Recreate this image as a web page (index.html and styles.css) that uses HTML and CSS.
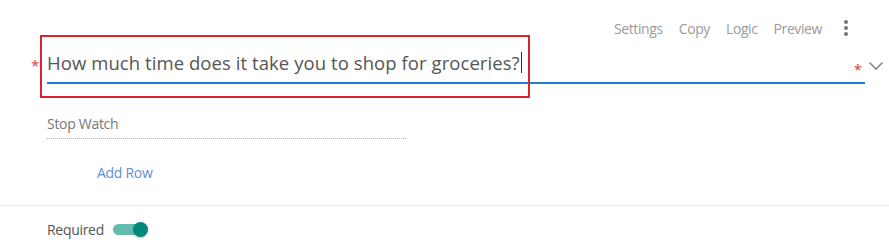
FILE: index.html
```html
<!DOCTYPE html>
<html>
<head>
<meta charset="utf-8">
<link rel="stylesheet" href="styles.css">
</head>
<body>
<div class="card">
  <div class="toolbar">
    <span class="tool">Settings</span>
    <span class="tool">Copy</span>
    <span class="tool">Logic</span>
    <span class="tool">Preview</span>
    <span class="kebab"><i></i><i></i><i></i></span>
  </div>
  <div class="question">
    <span class="req-left">*</span>
    <div class="q-input">
      <span class="q-text">How much time does it take you to shop for groceries?</span><span class="caret"></span>
    </div>
    <span class="req-right">*</span>
    <svg class="chevron" width="16" height="10" viewBox="0 0 16 10"><path d="M1.5 1.5 L8 8 L14.5 1.5" fill="none" stroke="#8a8a8a" stroke-width="1.6"/></svg>
    <div class="highlight"></div>
  </div>
  <div class="body">
    <div class="row-label">Stop Watch</div>
    <div class="add-row">Add Row</div>
  </div>
  <div class="footer">
    <span class="req-label">Required</span>
    <span class="toggle"><span class="knob"></span></span>
  </div>
</div>
</body>
</html>
```
FILE: styles.css
```css
html, body {
  margin: 0;
  padding: 0;
  background: #fff;
}
body {
  font-family: "Open Sans", "Noto Sans", sans-serif;
  width: 889px;
  height: 251px;
  overflow: hidden;
}
.card {
  display: flex;
  flex-direction: column;
}
.toolbar {
  display: flex;
  justify-content: flex-end;
  align-items: center;
  height: 22px;
  padding-top: 17px;
  padding-right: 40px;
}
.tool {
  font-size: 14px;
  color: #9a9a9a;
  margin-left: 16px;
  letter-spacing: -0.4px;
}
.kebab {
  display: flex;
  flex-direction: column;
  gap: 2px;
  margin-left: 22px;
  width: 5px;
}
.kebab i {
  display: block;
  width: 4px;
  height: 4px;
  border-radius: 50%;
  background: #777;
}
.question {
  position: relative;
  display: flex;
  align-items: flex-end;
  padding-left: 47px;
  padding-right: 24px;
  height: 45px;
}
.req-left {
  position: absolute;
  left: 31px;
  top: 16px;
  color: #e53935;
  font-size: 15px;
}
.q-input {
  flex: 1;
  height: 42px;
  border-bottom: 2px solid #1f7fd1;
  display: flex;
  align-items: center;
  padding-top: 1px;
  box-sizing: border-box;
}
.q-text {
  font-size: 18.5px;
  color: #555;
  letter-spacing: 0.07px;
}
.caret {
  display: inline-block;
  width: 1px;
  height: 21px;
  background: #333;
  margin-left: 1px;
}
.req-right {
  position: absolute;
  right: 27px;
  top: 20px;
  color: #e53935;
  font-size: 15px;
}
.chevron {
  position: absolute;
  right: 5px;
  top: 22px;
}
.highlight {
  position: absolute;
  left: 40px;
  top: -4px;
  width: 486px;
  height: 59px;
  border: 2px solid #d9232e;
}
.body {
  padding-left: 47px;
}
.row-label {
  width: 359px;
  margin-top: 30px;
  font-size: 14px;
  color: #777;
  letter-spacing: -0.3px;
  padding-bottom: 5px;
  border-bottom: 1px dotted #aaa;
}
.add-row {
  margin-left: 50px;
  margin-top: 24px;
  font-size: 14px;
  color: #5a8fd8;
  letter-spacing: -0.3px;
  height: 42px;
}
.footer {
  border-top: 1px solid #ececec;
  display: flex;
  align-items: center;
  padding-left: 47px;
  padding-top: 14px;
}
.req-label {
  font-size: 14px;
  color: #555;
  letter-spacing: -0.3px;
}
.toggle {
  position: relative;
  display: inline-block;
  width: 34px;
  height: 11px;
  border-radius: 6px;
  background: #64bbab;
  margin-left: 9px;
}
.knob {
  position: absolute;
  right: -1px;
  top: -2px;
  width: 15px;
  height: 15px;
  border-radius: 50%;
  background: #00897b;
  box-shadow: 0 1px 2px rgba(0,0,0,0.25);
}
```
